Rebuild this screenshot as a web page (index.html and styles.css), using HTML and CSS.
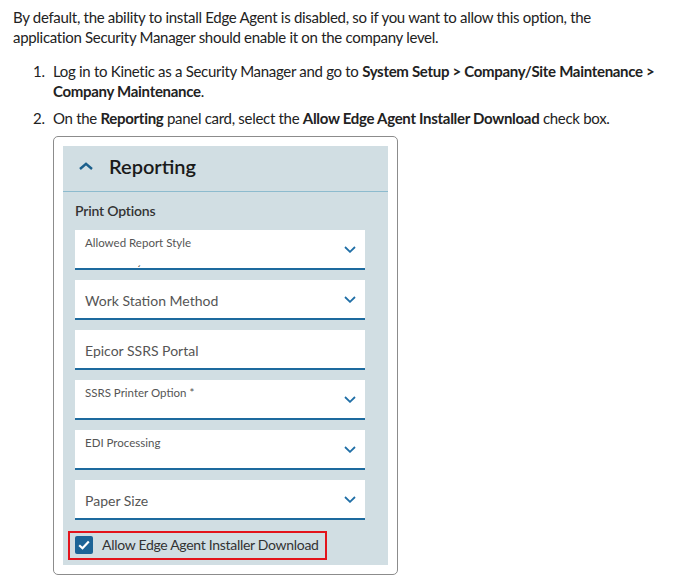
FILE: index.html
```html
<html lang="en">
	<head>
		<meta charset="UTF-8" />
		<meta name="viewport" content="width=device-width, initial-scale=1.0" />
		<title>Edge Agent Installer</title>
		<link rel="stylesheet" href="styles.css">
	</head>
	<body>
		<p>By default, the ability to install Edge Agent is disabled, so if you want to allow this option, the application Security Manager should enable it on the company level.</p>

		<ol class="steps">
			<li>Log in to Kinetic as a Security Manager and go to <b>System Setup &gt; Company/Site Maintenance &gt;</b> <b>Company Maintenance</b>.</li>
			<li>On the <b>Reporting</b> panel card, select the <b>Allow Edge Agent Installer Download</b> check box.
				<div class="shot">
					<div class="panel">
						<div class="panel-header">
							<svg class="chevron-up" width="14" height="8" viewBox="0 0 14 8"><polyline points="1,7 7,1.8 13,7" fill="none" stroke="#1b5f8c" stroke-width="2.4" /></svg>
							<span>Reporting</span>
						</div>
						<div class="panel-body">
							<div class="section-title">Print Options</div>

							<div class="field field-label">
								<span class="float-label">Allowed Report Style</span>
								<span class="tick">ˏ</span>
								<svg class="chevron-down" width="12" height="7" viewBox="0 0 12 7"><polyline points="1,1 6,5.8 11,1" fill="none" stroke="#1f6ea6" stroke-width="1.8" /></svg>
							</div>
							<div class="field">
								<span class="placeholder">Work Station Method</span>
								<svg class="chevron-down" width="12" height="7" viewBox="0 0 12 7"><polyline points="1,1 6,5.8 11,1" fill="none" stroke="#1f6ea6" stroke-width="1.8" /></svg>
							</div>
							<div class="field">
								<span class="placeholder">Epicor SSRS Portal</span>
							</div>
							<div class="field field-label">
								<span class="float-label">SSRS Printer Option *</span>
								<svg class="chevron-down" width="12" height="7" viewBox="0 0 12 7"><polyline points="1,1 6,5.8 11,1" fill="none" stroke="#1f6ea6" stroke-width="1.8" /></svg>
							</div>
							<div class="field field-label">
								<span class="float-label">EDI Processing</span>
								<svg class="chevron-down" width="12" height="7" viewBox="0 0 12 7"><polyline points="1,1 6,5.8 11,1" fill="none" stroke="#1f6ea6" stroke-width="1.8" /></svg>
							</div>
							<div class="field">
								<span class="placeholder">Paper Size</span>
								<svg class="chevron-down" width="12" height="7" viewBox="0 0 12 7"><polyline points="1,1 6,5.8 11,1" fill="none" stroke="#1f6ea6" stroke-width="1.8" /></svg>
							</div>

							<div class="check-row">
								<span class="checkbox">
									<svg width="12" height="10" viewBox="0 0 12 10"><polyline points="1.2,5.2 4.5,8.2 10.8,1.5" fill="none" stroke="#fff" stroke-width="2.2" /></svg>
								</span>
								<span class="check-label">Allow Edge Agent Installer Download</span>
							</div>
						</div>
					</div>
				</div>
			</li>
		</ol>
	</body>
</html>
```

FILE: styles.css
```css
body {
	margin: 0;
	padding: 7px 19px 8px 13px;
	font-family: Lato, "Open Sans", sans-serif;
	font-size: 15px;
	line-height: 20px;
	letter-spacing: -0.3px;
	color: #222;
}
p {
	margin: 0 0 14px;
}
b {
	font-weight: 700;
}
.steps {
	margin: 0;
	padding-left: 40px;
	list-style: none;
	counter-reset: step;
}
.steps li {
	counter-increment: step;
	margin-bottom: 7px;
}
.steps li::before {
	content: counter(step) ".";
	display: inline-block;
	width: 20px;
	margin-left: -20px;
}
.shot {
	width: 325px;
	margin-top: 8px;
	padding: 9px;
	border: 1px solid #8c8c8c;
	border-radius: 5px;
	letter-spacing: 0;
}
.panel {
	background-color: #d1dee3;
	padding-bottom: 5px;
}
.panel-header {
	display: flex;
	align-items: center;
	height: 40px;
	padding: 0 0 5px 16px;
	border-bottom: 1px solid #8dbbce;
	font-size: 20px;
	font-weight: 600;
	color: #1a1a1a;
}
.chevron-up {
	margin-right: 16px;
	margin-top: -1px;
}
.panel-body {
	padding: 9px 23px 0 12px;
}
.section-title {
	font-size: 14px;
	font-weight: 600;
	color: #333;
	line-height: 20px;
	margin-bottom: 9px;
	letter-spacing: -0.2px;
}
.field {
	position: relative;
	display: flex;
	align-items: center;
	height: 38px;
	margin-bottom: 10px;
	padding: 0 9px 0 10px;
	background-color: #fff;
	border-bottom: 2px solid #1d6a9e;
}
.field-label {
	align-items: flex-start;
}
.placeholder {
	flex-grow: 1;
	padding-top: 3px;
	font-size: 14px;
	color: #555;
}
.float-label {
	flex-grow: 1;
	margin-top: 5px;
	font-size: 11.5px;
	line-height: 16px;
	color: #555;
}
.field-label .chevron-down {
	align-self: center;
}
.tick {
	position: absolute;
	left: 62px;
	bottom: -3px;
	font-size: 11px;
	color: #222;
}
.check-row {
	display: flex;
	align-items: center;
	width: fit-content;
	margin-left: -7px;
	margin-top: 11px;
	padding: 2px 6px 3px 5px;
	border: 2px solid #e3141c;
}
.checkbox {
	display: flex;
	align-items: center;
	justify-content: center;
	width: 18px;
	height: 18px;
	border-radius: 2px;
	background-color: #1c6497;
	margin-right: 9px;
}
.check-label {
	font-size: 14px;
	letter-spacing: -0.3px;
	color: #333;
}
```
